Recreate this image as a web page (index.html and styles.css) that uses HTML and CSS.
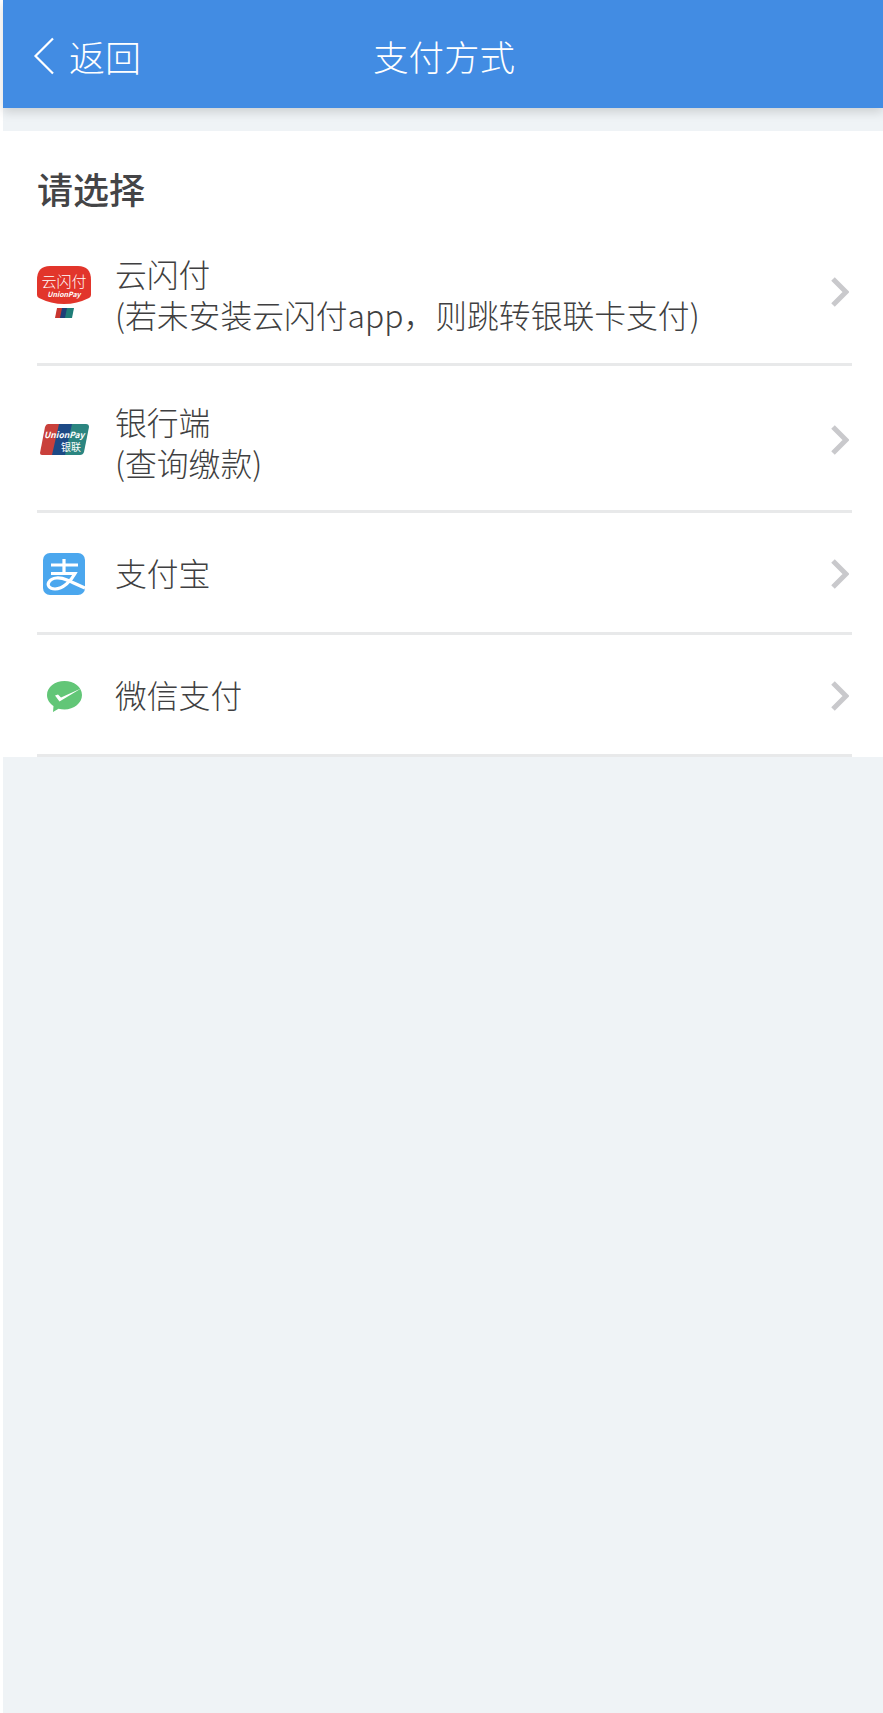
FILE: index.html
```html
<!DOCTYPE html>
<html lang="zh-CN">
<head>
    <meta charset="UTF-8">
    <meta name="viewport" content="width=device-width, initial-scale=1.0">
    <title>支付方式</title>
    <link rel="stylesheet" href="styles.css">
</head>
<body>

    <div class="page">
        <div class="topbar">
            <div class="back">
                <svg class="back-icon" viewBox="0 0 22 38"><path d="M20 1.500 L2.500 19 L20 36.500" /></svg>
                <span>返回</span>
            </div>
            <div class="topbar-title">支付方式</div>
        </div>

        <div class="panel">
            <h3 class="panel-title">请选择</h3>

            <div class="pay-item pay-item-first">
                <div class="pay-icon">
                    <svg class="icon-cloud" viewBox="0 0 54 52">
                        <path d="M13 0 H41 Q54 0 54 14 V29 Q54 31 52 32 Q40 38 27 38 Q14 38 2 32 Q0 31 0 29 V14 Q0 0 13 0 Z" fill="#e2352b" />
                        <text x="27" y="21" class="cloud-cn">云闪付</text>
                        <text x="27" y="31" class="cloud-en">UnionPay</text>
                        <path d="M20 42 H26 L24 52 H18 Z" fill="#c8352f" />
                        <path d="M25 42 H31 L29 52 H23 Z" fill="#1d3f78" />
                        <path d="M30 42 H37 L35 52 H28 Z" fill="#1f7d78" />
                    </svg>
                </div>
                <div class="pay-text pay-text-two">云闪付<br>(若未安装云闪付app，则跳转银联卡支付)</div>
                <svg class="arrow" viewBox="0 0 18 30"><path d="M2 2 L15 15 L2 28" /></svg>
            </div>

            <div class="pay-item pay-item-tall">
                <div class="pay-icon">
                    <svg class="icon-bank" viewBox="0 0 49 31">
                        <path d="M8 0 H20 L13 31 H2 Q0 31 0 29 L5 3 Q6 0 8 0 Z" fill="#c9403b" />
                        <path d="M19 0 H33 L26 31 H12 Z" fill="#1d4a86" />
                        <path d="M32 0 H46 Q49 0 49 3 L44 28 Q43 31 40 31 H25 Z" fill="#2b8580" />
                        <text x="4" y="14" class="bank-en">UnionPay</text>
                        <text x="21" y="26.500" class="bank-cn">银联</text>
                    </svg>
                </div>
                <div class="pay-text pay-text-two">银行端<br>(查询缴款)</div>
                <svg class="arrow" viewBox="0 0 18 30"><path d="M2 2 L15 15 L2 28" /></svg>
            </div>

            <div class="pay-item">
                <div class="pay-icon">
                    <svg class="icon-ali" viewBox="0 0 42 42">
                        <rect width="42" height="42" rx="7" fill="#4ba7ee" />
                        <path d="M8 12 H35 M21 6 V20 M8 20.500 H32 C28 28 20 36 12 36 C6 36 4 32 6 29 C9 24 17 24 24 27 C30 29.500 36 32.500 42 35" fill="none" stroke="#fff" stroke-width="3.200" />
                    </svg>
                </div>
                <div class="pay-text pay-text-one">支付宝</div>
                <svg class="arrow" viewBox="0 0 18 30"><path d="M2 2 L15 15 L2 28" /></svg>
            </div>

            <div class="pay-item">
                <div class="pay-icon">
                    <svg class="icon-wx" viewBox="0 0 35 31">
                        <path d="M17.500 0 C27 0 35 6 35 14 C35 22 27 28.500 17.500 28.500 C15.500 28.500 13.500 28.200 11.500 27.700 L6 31 L6.500 25 C2.500 22.500 0 18.500 0 14 C0 6 8 0 17.500 0 Z" fill="#62c677" />
                        <path d="M8 14.500 L11 13.500 L14 16.500 L34 7.500 L12.500 20.500 Z" fill="#fff" />
                    </svg>
                </div>
                <div class="pay-text pay-text-one">微信支付</div>
                <svg class="arrow" viewBox="0 0 18 30"><path d="M2 2 L15 15 L2 28" /></svg>
            </div>
        </div>
    </div>

</body>
</html>
```

FILE: styles.css
```css
html, body {
    margin: 0;
    padding: 0;
    background: white;
}
body {
    font-family: "Noto Sans CJK SC", "Noto Sans", sans-serif;
    color: #3f3f41;
}
.page {
    margin-left: 3px;
    min-height: 1713px;
    background-color: #eff3f6;
}
.topbar {
    position: relative;
    display: flex;
    align-items: center;
    justify-content: center;
    height: 108px;
    padding-top: 2px;
    box-sizing: border-box;
    margin-bottom: 23px;
    background-color: #428ce3;
    color: white;
    box-shadow: 0px 4px 10px rgba(0, 0, 0, 0.15);
}
.topbar-title {
    font-size: 35.5px;
    font-weight: 300;
    margin-left: 2px;
}
.back {
    position: absolute;
    left: 30px;
    top: 4px;
    bottom: 0;
    display: flex;
    align-items: center;
    gap: 14px;
    font-size: 36px;
    font-weight: 300;
}
.back-icon {
    width: 22px;
    height: 38px;
}
.back-icon path {
    fill: none;
    stroke: white;
    stroke-width: 2.2;
}
.panel {
    background: white;
    padding: 0 31px 0 34px;
}
.panel-title {
    margin: 0;
    height: 87px;
    line-height: 115px;
    font-size: 36px;
    font-weight: 500;
    color: #444446;
}
.pay-item {
    display: flex;
    align-items: center;
    height: 122px;
    padding-top: 3px;
    border-bottom: 3px solid #e8e9ea;
    box-sizing: border-box;
}
.pay-item-first {
    height: 148px;
}
.pay-item-tall {
    height: 147px;
}
.pay-icon {
    display: flex;
    justify-content: center;
    width: 54px;
    margin-right: 24px;
}
.icon-cloud {
    width: 54px;
    height: 52px;
}
.icon-bank {
    width: 49px;
    height: 31px;
}
.icon-ali {
    width: 42px;
    height: 42px;
}
.icon-wx {
    width: 35px;
    height: 31px;
}
.cloud-cn {
    font-size: 15px;
    font-weight: 300;
    fill: white;
    text-anchor: middle;
}
.cloud-en {
    font-size: 7px;
    font-weight: 700;
    font-style: italic;
    fill: white;
    text-anchor: middle;
}
.bank-en {
    font-size: 8.5px;
    font-weight: 700;
    font-style: italic;
    fill: white;
}
.bank-cn {
    font-size: 10px;
    fill: white;
}
.pay-text {
    flex: 1;
    font-size: 31.8px;
    font-weight: 300;
    line-height: 41px;
}
.pay-text-two {
    margin-top: 4px;
}
.pay-text-one {
    margin-bottom: 4px;
}
.arrow {
    width: 18px;
    height: 30px;
    margin-right: 3px;
    flex: none;
}
.arrow path {
    fill: none;
    stroke: #c9c9cc;
    stroke-width: 5;
}
```
